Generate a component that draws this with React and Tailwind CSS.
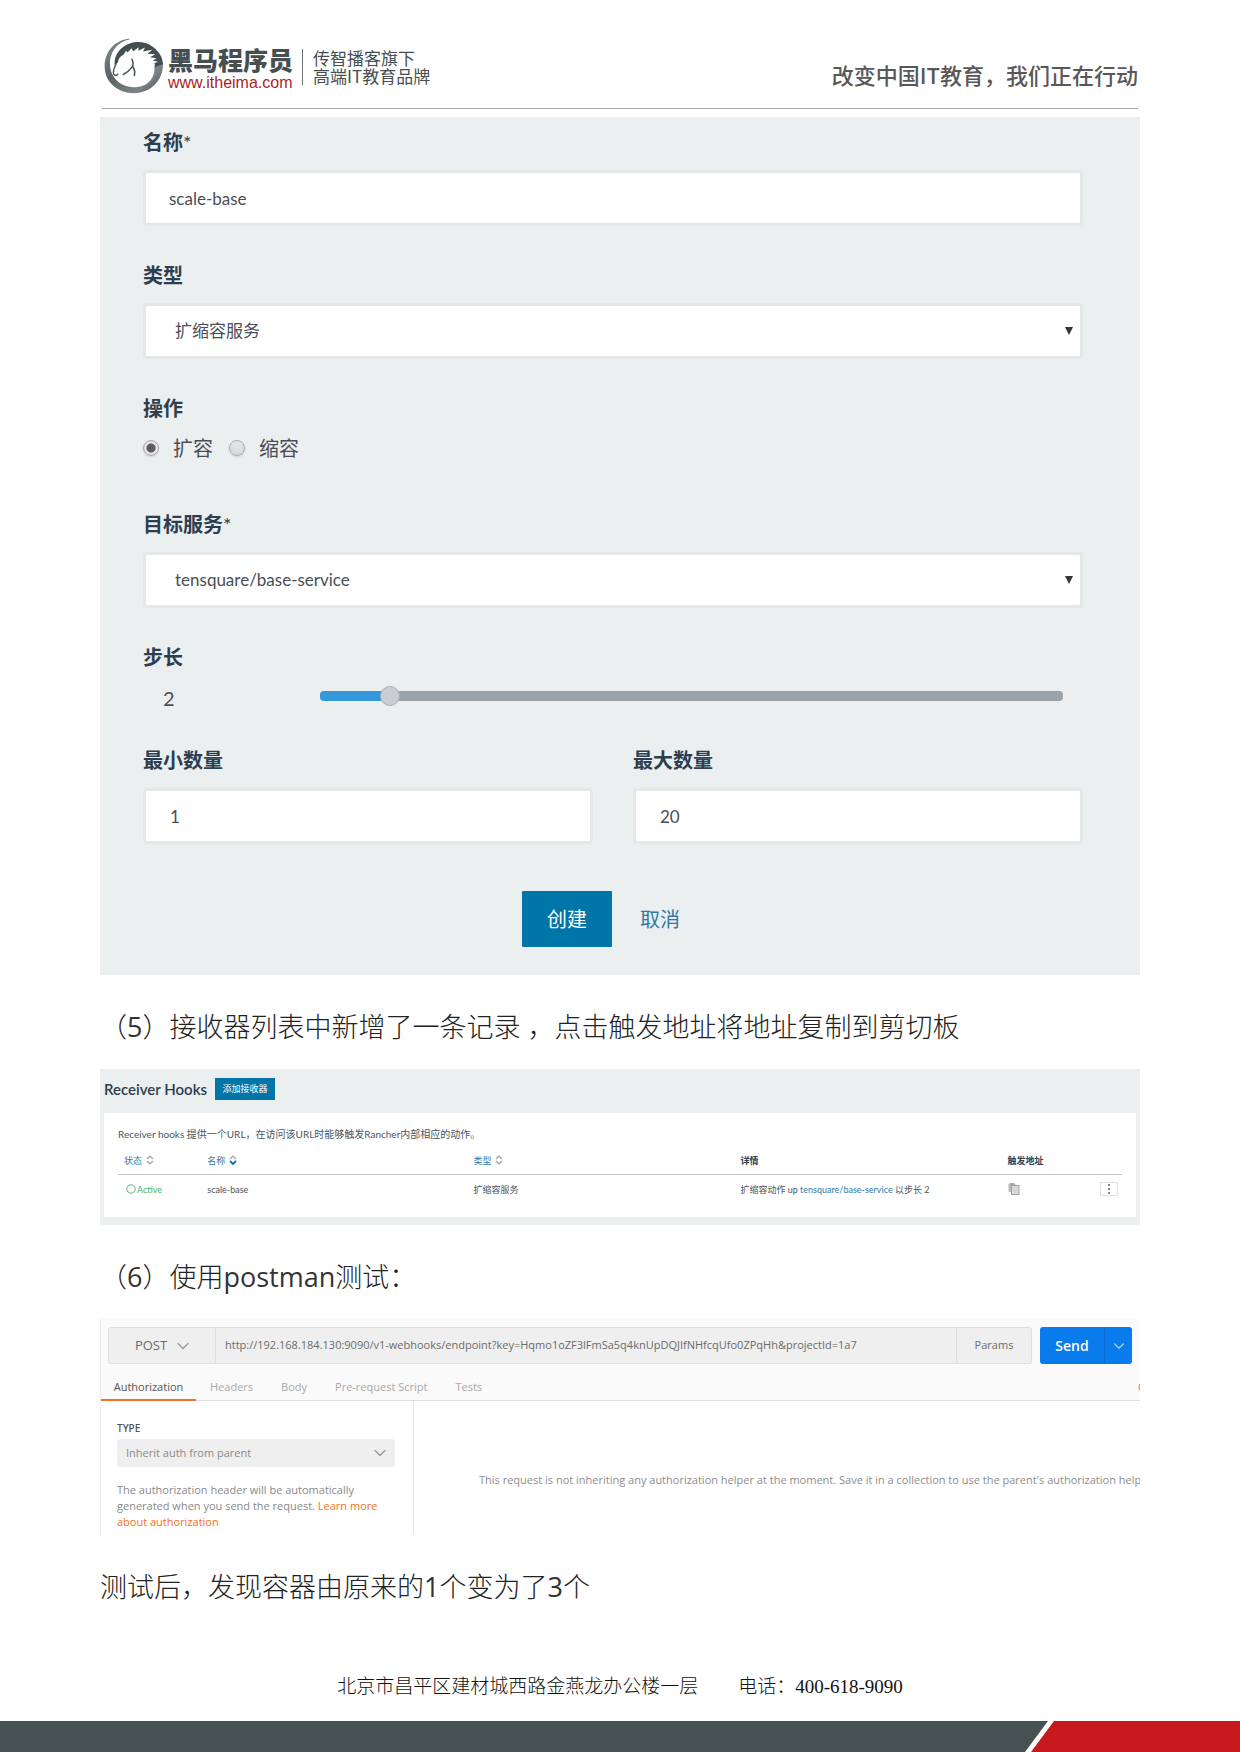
import React, { useState } from "react";
import { ChevronDown } from "lucide-react";

const fieldClass =
  "block h-14 w-full rounded-sm border-[3px] border-[#e4e8e9] bg-white text-[17px] text-[#4a4e57] outline-none";
const labelClass = "block text-xl/7 font-bold text-[#2c3e50]";

function HorseLogo() {
  return (
    <svg viewBox="12 10 180 170" className="h-[57px] w-[60px] shrink-0" aria-hidden="true">
      <defs>
        <linearGradient id="ring" x1="0" y1="0" x2="1" y2="1">
          <stop offset="0" stopColor="#8b9193" />
          <stop offset="0.4" stopColor="#5a6264" />
          <stop offset="0.75" stopColor="#7d8486" />
          <stop offset="1" stopColor="#454e50" />
        </linearGradient>
      </defs>
      <path
        d="M88 14C42 20 14 54 14 98c0 46 38 80 88 80 50 0 88-38 87-88l-26 6c2 18-2 32-12 44-13 15-31 21-51 20-40-2-68-30-70-66C28 56 52 24 88 17z"
        fill="url(#ring)"
      />
      <path
        d="M44 96c-2-22 6-42 26-57 24-18 60-19 86-2 20 13 32 33 33 54l-24 8c1-5-1-8-3-10l12-5-16-4 12-7-20-3 16-9-24-1 15-12-28 5 6-12-20 10 1-11-16 12-6-9-11 13-5-5-7 11c-11 5-16 13-17 23l-9 7z"
        fill="#454e50"
      />
      <path d="M50 84c-3 13-11 22-10 33 1 8 9 11 13 4" fill="none" stroke="#454e50" strokeWidth="4" strokeLinecap="round" />
      <path d="M96 76c4 10 6 16 0 24-7 9-15 17-26 22M98 98c5 7 8 16 5 27" fill="none" stroke="#454e50" strokeWidth="4.500" strokeLinecap="round" />
    </svg>
  );
}

function SelectField({ id, value }) {
  return (
    <div className="relative mt-3.5">
      <select id={id} className={fieldClass + " appearance-none pl-[29px]"} defaultValue={value}>
        <option>{value}</option>
      </select>
      <svg viewBox="0 0 8 8" className="pointer-events-none absolute top-6 right-2.5 size-2" aria-hidden="true">
        <path d="M0 0h8L4 8z" fill="#33373d" />
      </svg>
    </div>
  );
}

function RadioOption({ label, checked, onChange }) {
  return (
    <label className="flex items-center gap-[14px] text-xl/7 text-[#4a4e57]">
      <input
        type="radio"
        name="action"
        checked={checked}
        onChange={onChange}
        className="size-4 appearance-none rounded-full border border-[#a9abac] bg-linear-to-b from-[#e6e6e6] to-[#dadada] shadow-sm checked:bg-[radial-gradient(circle,#5c5c5c_0_4px,#e2e2e2_5px)]"
      />
      {label}
    </label>
  );
}

function HookForm() {
  const [action, setAction] = useState("up");
  const [step, setStep] = useState(2);
  const min = 1;
  const max = 13;
  const ratio = (step - min) / (max - min);
  return (
    <form className="bg-[#ebefef] pt-[11px] pr-[57px] pb-7 pl-[43px]">
      <label htmlFor="name" className={labelClass}>
        名称<span className="font-normal">*</span>
      </label>
      <input id="name" className={fieldClass + " mt-3.5 px-[23px]"} defaultValue="scale-base" />

      <label htmlFor="kind" className={labelClass + " mt-[35px]"}>类型</label>
      <SelectField id="kind" value="扩缩容服务" />

      <fieldset className="mt-[35px]">
        <legend className={labelClass}>操作</legend>
        <div className="mt-3 flex gap-4">
          <RadioOption label="扩容" checked={action === "up"} onChange={() => setAction("up")} />
          <RadioOption label="缩容" checked={action === "down"} onChange={() => setAction("down")} />
        </div>
      </fieldset>

      <label htmlFor="target" className={labelClass + " mt-12"}>
        目标服务<span className="font-normal">*</span>
      </label>
      <SelectField id="target" value="tensquare/base-service" />

      <label htmlFor="step" className={labelClass + " mt-[35px]"}>步长</label>
      <div className="mt-[9px] flex h-8 items-center px-5">
        <output htmlFor="step" className="w-[157px] pt-1 text-xl/7 text-[#4a4e57]">{step}</output>
        <input
          id="step"
          type="range"
          min={min}
          max={max}
          value={step}
          onChange={(e) => setStep(Number(e.target.value))}
          style={{
            backgroundImage: `linear-gradient(to right, #3498db ${ratio * 100}%, #9aa3a8 ${ratio * 100}%)`,
          }}
          className="h-[10px] min-w-0 flex-1 appearance-none rounded-[4px] [&::-webkit-slider-thumb]:size-5 [&::-webkit-slider-thumb]:appearance-none [&::-webkit-slider-thumb]:rounded-full [&::-webkit-slider-thumb]:border [&::-webkit-slider-thumb]:border-[#aab0b3] [&::-webkit-slider-thumb]:bg-[#caced1]"
        />
      </div>

      <div className="mt-[34px] grid grid-cols-2 gap-10">
        <div>
          <label htmlFor="min" className={labelClass}>最小数量</label>
          <input id="min" className={fieldClass + " mt-3.5 px-6"} defaultValue="1" />
        </div>
        <div>
          <label htmlFor="max" className={labelClass}>最大数量</label>
          <input id="max" className={fieldClass + " mt-3.5 px-6"} defaultValue="20" />
        </div>
      </div>

      <div className="mt-[47px] flex items-center justify-center gap-7 pr-6">
        <button type="button" className="h-14 w-[90px] rounded-[1px] bg-[#0075a8] text-xl text-white">创建</button>
        <button type="button" className="text-xl text-[#2f7aa5]">取消</button>
      </div>
    </form>
  );
}

function SortIcon({ active }) {
  return (
    <svg viewBox="0 0 8 10" className="h-[10px] w-2" fill="none" strokeWidth="1.2" aria-hidden="true">
      <path d="M1 4l3-3 3 3" stroke="#9aa3a8" />
      <path d="M1 6l3 3 3-3" stroke={active ? "#0075a8" : "#9aa3a8"} strokeWidth={active ? 1.8 : 1.2} />
    </svg>
  );
}

function SortHeader({ children, active }) {
  return (
    <th className="px-1.5 text-left font-normal">
      <button type="button" className="flex items-center gap-1 text-[#2f7aa5]">
        {children}
        <SortIcon active={active} />
      </button>
    </th>
  );
}

function ReceiverHooks() {
  return (
    <section className="mt-6 bg-[#ebefef] px-1 pt-[9px] pb-2">
      <div className="flex items-center gap-2">
        <h2 className="text-[15px]/[21px] font-semibold text-[#2c3e50]">Receiver Hooks</h2>
        <button type="button" className="h-[22px] w-[60px] bg-[#0075a8] text-[9px] text-white">添加接收器</button>
      </div>
      <div className="mt-[13px] bg-white px-3.5 pt-3 pb-[13px] text-[#4a5560]">
        <p className="text-[10px]/[18px]">Receiver hooks 提供一个URL，在访问该URL时能够触发Rancher内部相应的动作。</p>
        <table className="mt-1 w-full table-fixed text-[9px]">
          <colgroup>
            <col className="w-[8.3%]" />
            <col className="w-[26.5%]" />
            <col className="w-[26.6%]" />
            <col className="w-[26.6%]" />
            <col />
            <col className="w-9" />
          </colgroup>
          <thead>
            <tr className="h-[27px] border-b border-[#c5c9cc]">
              <SortHeader>状态</SortHeader>
              <SortHeader active>名称</SortHeader>
              <SortHeader>类型</SortHeader>
              <th className="px-1.5 text-left font-bold text-[#2c3e50]">详情</th>
              <th className="px-1.5 text-left font-bold text-[#2c3e50]">触发地址</th>
              <th />
            </tr>
          </thead>
          <tbody>
            <tr className="h-[30px]">
              <td className="px-1.5">
                <span className="flex items-center gap-px pl-0.5 text-[#3fb36b]">
                  <svg viewBox="0 0 10 10" className="size-[10px]" aria-hidden="true">
                    <circle cx="5" cy="5" r="4.2" fill="none" stroke="#3fb36b" strokeWidth="0.9" />
                  </svg>
                  Active
                </span>
              </td>
              <td className="px-1.5">scale-base</td>
              <td className="px-1.5">扩缩容服务</td>
              <td className="px-1.5">
                扩缩容动作 up <a href="#service" className="text-[#2f7aa5]">tensquare/base-service</a> 以步长 2
              </td>
              <td className="px-1.5">
                <button type="button" aria-label="复制触发地址" className="block">
                  <svg viewBox="0 0 12 12" className="size-3" aria-hidden="true">
                    <rect x="0.5" y="0.5" width="7" height="8.500" rx="1" fill="#bdb9b5" />
                    <rect x="2" y="0" width="4" height="2" fill="#aaa5a1" />
                    <rect x="3.5" y="2.5" width="7.500" height="9" fill="#dedede" stroke="#a5a09c" />
                    <path d="M5 5h4.500M5 7h4.500M5 9h4.500" stroke="#c4c4c4" strokeWidth="0.7" />
                  </svg>
                </button>
              </td>
              <td className="pr-1">
                <button
                  type="button"
                  aria-label="更多"
                  className="ml-auto flex h-3.5 w-[18px] items-center justify-center border border-[#dfe3e5]"
                >
                  <svg viewBox="0 0 2 10" className="h-[10px] w-0.5" fill="#7d8890" aria-hidden="true">
                    <rect width="2" height="2" y="0" />
                    <rect width="2" height="2" y="4" />
                    <rect width="2" height="2" y="8" />
                  </svg>
                </button>
              </td>
            </tr>
          </tbody>
        </table>
      </div>
    </section>
  );
}

function PostmanPanel() {
  const tabs = ["Headers", "Body", "Pre-request Script", "Tests"];
  return (
    <section className="mt-6 overflow-hidden border-l border-[#ececec] bg-[#fafafa] font-['Open_Sans',sans-serif] text-[#6b6b6b]">
      <div className="flex gap-2 pt-2 pr-2 pl-[7px]">
        <div className="flex h-[37px] min-w-0 flex-1 rounded-[3px] border border-[#dedede] bg-[#efefef]">
          <button type="button" className="flex w-[107px] items-center justify-center gap-1.5 border-r border-[#dedede] pl-1 text-[13px] font-medium">
            POST
            <ChevronDown className="size-5" strokeWidth={1.5} color="#999999" />
          </button>
          <input
            aria-label="Request URL"
            className="min-w-0 flex-1 px-[9px] text-[11px] outline-none"
            defaultValue="http://192.168.184.130:9090/v1-webhooks/endpoint?key=Hqmo1oZF3lFmSa5q4knUpDQJIfNHfcqUfo0ZPqHh&projectId=1a7"
          />
          <button type="button" className="w-[75px] border-l border-[#dedede] text-[11px]">Params</button>
        </div>
        <div className="flex h-[37px] overflow-hidden rounded-[3px] bg-[#097bed] text-white">
          <button type="button" className="w-16 text-sm font-semibold">Send</button>
          <button type="button" aria-label="Send options" className="flex w-7 items-center justify-center border-l border-[#0a6cd0]">
            <ChevronDown className="size-[18px]" strokeWidth={1.5} color="#b5d4f5" />
          </button>
        </div>
      </div>
      <nav className="mt-[9px] flex h-7 items-stretch border-b border-[#e0e0e0] text-[11px] text-[#a9a9a9]">
        <a href="#authorization" className="-mb-px w-[95px] border-b-2 border-[#f47023] pt-1.5 text-center text-[#555555]">Authorization</a>
        <div className="flex gap-7 pt-1.5 pl-3.5">
          {tabs.map((tab) => (
            <a key={tab} href={"#" + tab}>{tab}</a>
          ))}
        </div>
        <a href="#cookies" className="-mr-12 ml-auto w-[50px] shrink-0 pt-1.5 text-[#f47023]">Cookies</a>
      </nav>
      <div className="flex h-[133px] bg-white text-[11px]">
        <div className="w-[313px] shrink-0 border-r border-[#e6e6e6] pt-[19px] pr-[18px] pl-4">
          <label htmlFor="auth-type" className="block text-[10px]/4 font-semibold text-[#555555]">TYPE</label>
          <div className="relative mt-[3px]">
            <select
              id="auth-type"
              className="block h-7 w-full appearance-none rounded-[3px] bg-[#efefef] pl-[9px] text-[11px] text-[#8a8a8a] outline-none"
              defaultValue="Inherit auth from parent"
            >
              <option>Inherit auth from parent</option>
            </select>
            <ChevronDown className="pointer-events-none absolute top-1 right-[5px] size-5" strokeWidth={1.5} color="#999999" />
          </div>
          <p className="mt-[15px] text-[11px]/4 text-[#8a8a8a]">
            The authorization header will be automatically generated when you send the request.{" "}
            <a href="#learn" className="text-[#f47023]">Learn more about authorization</a>
          </p>
        </div>
        <p className="pt-[71px] pl-[65px] text-[11px]/4 whitespace-nowrap text-[#8e8e8e]">
          This request is not inheriting any authorization helper at the moment. Save it in a collection to use the parent's authorization helper
        </p>
      </div>
    </section>
  );
}

function Note({ className, children }) {
  return (
    <p className={"font-['Open_Sans','Noto_Sans_CJK_SC',sans-serif] text-[27px]/9 font-light text-[#222222] " + className}>
      {children}
    </p>
  );
}

function Latin({ children }) {
  return <span className="font-normal text-[#333333]">{children}</span>;
}

export default function App() {
  return (
    <div className="bg-white font-['Lato','Noto_Sans_CJK_SC',sans-serif]">
      <div className="mx-[100px]">
        <header className="mx-0.5 flex h-[109px] justify-between border-b border-[#a9a9a9] font-['Noto_Sans_CJK_SC',sans-serif]">
          <div className="flex items-start pt-[37px] pl-0.5">
            <HorseLogo />
            <div className="pt-2 pl-1">
              <p className="text-[25px]/[29px] font-black text-[#454e50]">黑马程序员</p>
              <a href="#home" className="block font-['Liberation_Sans',sans-serif] text-base/[18px] text-[#a91f24]">www.itheima.com</a>
            </div>
            <div className="mt-3 ml-[9px] border-l border-[#6b7274] pl-2.5 text-[17px]/[18px] text-[#454e50]">
              <p>传智播客旗下</p>
              <p>高端IT教育品牌</p>
            </div>
          </div>
          <p className="pt-[58px] text-[22px]/8 font-medium text-[#595757]">改变中国IT教育，我们正在行动</p>
        </header>
        <main className="mt-2">
          <HookForm />
          <Note className="mt-[34px]">（<Latin>5</Latin>）接收器列表中新增了一条记录 ，点击触发地址将地址复制到剪切板</Note>
          <ReceiverHooks />
          <Note className="mt-[34px]">（<Latin>6</Latin>）使用<Latin>postman</Latin>测试：</Note>
          <PostmanPanel />
          <Note className="mt-[35px]">测试后，发现容器由原来的<Latin>1</Latin>个变为了<Latin>3</Latin>个</Note>
        </main>
      </div>
      <footer>
        <div className="mt-[68px] flex justify-center gap-10 font-['Liberation_Serif','Noto_Sans_CJK_SC',serif] text-[19px]/7 font-light text-[#111111]">
          <p>北京市昌平区建材城西路金燕龙办公楼一层</p>
          <p>电话：400-618-9090</p>
        </div>
        <div className="mt-5 flex h-[31px] bg-[#485152]">
          <div className="ml-auto h-full w-[215px] bg-white [clip-path:polygon(23px_0,100%_0,100%_100%,0_100%)]">
            <div className="h-full bg-[#c7191b] [clip-path:polygon(29px_0,100%_0,100%_100%,6px_100%)]" />
          </div>
        </div>
      </footer>
    </div>
  );
}
